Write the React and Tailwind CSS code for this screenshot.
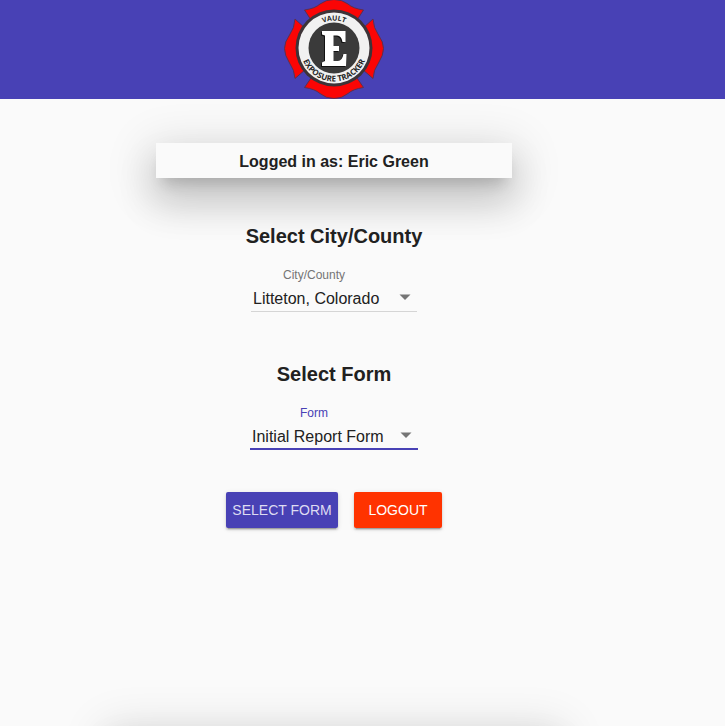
import { useId } from "react";

function Logo() {
  return (
    <svg viewBox="0 0 100 99" className="h-[99px] w-[100px]" role="img" aria-label="Vault Exposure Tracker">
      <defs>
        <path id="logo-top" d="M22.500 48A27.500 27.500 0 0 1 77.500 48" />
        <path id="logo-bottom" d="M16.500 48A33.500 33.500 0 0 0 83.500 48" />
      </defs>
      <g fill="#fb0505" stroke="#5b3050" strokeWidth="1">
        <path d="M20.500 10Q31 8.500 36 4Q42 -.5 50 -.5T64 4Q69 8.500 79.500 10L73 20H27Z" />
        <path d="M20.500 87.500Q31 89 36 93.500Q42 98.500 50 98.500T64 93.500Q69 89 79.500 87.500L73 78H27Z" />
        <path d="M11 19Q10.500 28 5.500 35Q.5 42 .5 48.500T5.500 63Q10.500 70 11 78.500L22 69V29Z" />
        <path d="M89 19Q89.500 28 94.500 35Q99.500 42 99.500 48.500T94.500 63Q89.500 70 89 78.500L78 69V29Z" />
      </g>
      <circle cx="50" cy="48" r="38.500" fill="#3d3438" />
      <circle cx="50" cy="48" r="35.500" fill="#f1f1f1" />
      <circle cx="50" cy="48" r="25.500" fill="#3a3a3a" />
      <g fontFamily="'Open Sans', 'Liberation Sans', sans-serif" fontWeight="700" fill="#262626" textAnchor="middle">
        <text fontSize="7">
          <textPath href="#logo-top" startOffset="50%">VAULT</textPath>
        </text>
        <text fontSize="8">
          <textPath href="#logo-bottom" startOffset="50%">EXPOSURE TRACKER</textPath>
        </text>
      </g>
      <path
        d="M38 31H61.500V42H58.500Q57.500 35.500 53 35.500H49.500V46H55V51H49.500V61H54Q58 61 59.500 54H62.500L62 66H38V62.500L41 61V35.500L38 34.500Z"
        fill="#111"
        transform="translate(-1 1)"
      />
      <path
        d="M38 31H61.500V42H58.500Q57.500 35.500 53 35.500H49.500V46H55V51H49.500V61H54Q58 61 59.500 54H62.500L62 66H38V62.500L41 61V35.500L38 34.500Z"
        fill="#fff"
      />
    </svg>
  );
}

function SelectField({ label, options, focused }) {
  const id = useId();
  return (
    <div className={focused ? "flex w-[168px] flex-col" : "flex w-[166px] flex-col"}>
      <label
        htmlFor={id}
        className={
          focused
            ? "pr-10 text-center text-xs leading-4 text-[#4841b5]"
            : "pr-10 text-center text-xs leading-4 text-[#757575]"
        }
      >
        {label}
      </label>
      <div
        className={
          focused
            ? "mt-1 grid h-[25px] items-center border-b-2 border-[#4841b5]"
            : "mt-1 grid h-[25px] items-center border-b border-[#d5d5d5]"
        }
      >
        <select
          id={id}
          className="col-start-1 row-start-1 h-6 w-full appearance-none bg-transparent px-[2px] text-base leading-5 text-[#212121] outline-none"
        >
          {options.map((option) => (
            <option key={option}>{option}</option>
          ))}
        </select>
        <svg
          viewBox="0 0 24 24"
          className="pointer-events-none col-start-1 row-start-1 size-6 justify-self-end fill-[#757575]"
          aria-hidden="true"
        >
          <path d="M6.500 7.500h11L12 13z" />
        </svg>
      </div>
    </div>
  );
}

export default function App() {
  return (
    <div className="flex h-screen flex-col overflow-hidden bg-[#fafafa] font-['Liberation_Sans',Arial,sans-serif] text-[#212121]">
      <div className="flex min-h-screen shrink-0 flex-col">
        <header className="flex justify-center bg-[#4841b5] pr-[57px]">
          <Logo />
        </header>
        <main className="flex flex-1 flex-col items-center pt-11 pr-[57px]">
          <p className="w-[356px] bg-[#fafafa] pt-[9px] pb-[7px] text-center text-base leading-[19px] font-bold shadow-[0_11px_15px_-7px_rgba(0,0,0,0.2),0_24px_38px_3px_rgba(0,0,0,0.14),0_9px_46px_8px_rgba(0,0,0,0.12)]">
            Logged in as: Eric Green
          </p>
          <h2 className="mt-11 mb-[17px] text-xl leading-7 font-bold">Select City/County</h2>
          <SelectField label="City/County" options={["Litteton, Colorado"]} />
          <h2 className="mt-12 mb-[17px] text-xl leading-7 font-bold">Select Form</h2>
          <SelectField label="Form" options={["Initial Report Form"]} focused />
          <div className="mt-[42px] flex gap-4">
            <button
              type="button"
              className="h-9 w-28 rounded-xs bg-[#4841b5] text-sm text-[#dedcf2] shadow-[0_3px_1px_-2px_rgba(0,0,0,0.2),0_2px_2px_0_rgba(0,0,0,0.14),0_1px_5px_0_rgba(0,0,0,0.12)]"
            >
              SELECT FORM
            </button>
            <button
              type="button"
              className="h-9 w-[88px] rounded-xs bg-[#ff3300] text-sm text-white shadow-[0_3px_1px_-2px_rgba(0,0,0,0.2),0_2px_2px_0_rgba(0,0,0,0.14),0_1px_5px_0_rgba(0,0,0,0.12)]"
            >
              LOGOUT
            </button>
          </div>
        </main>
      </div>
      <footer className="flex shrink-0 justify-center pr-[57px]">
        <div className="h-24 w-2/3 bg-[#fafafa] shadow-[0_11px_15px_-7px_rgba(0,0,0,0.2),0_24px_38px_3px_rgba(0,0,0,0.14),0_9px_46px_8px_rgba(0,0,0,0.12)]" />
      </footer>
    </div>
  );
}
